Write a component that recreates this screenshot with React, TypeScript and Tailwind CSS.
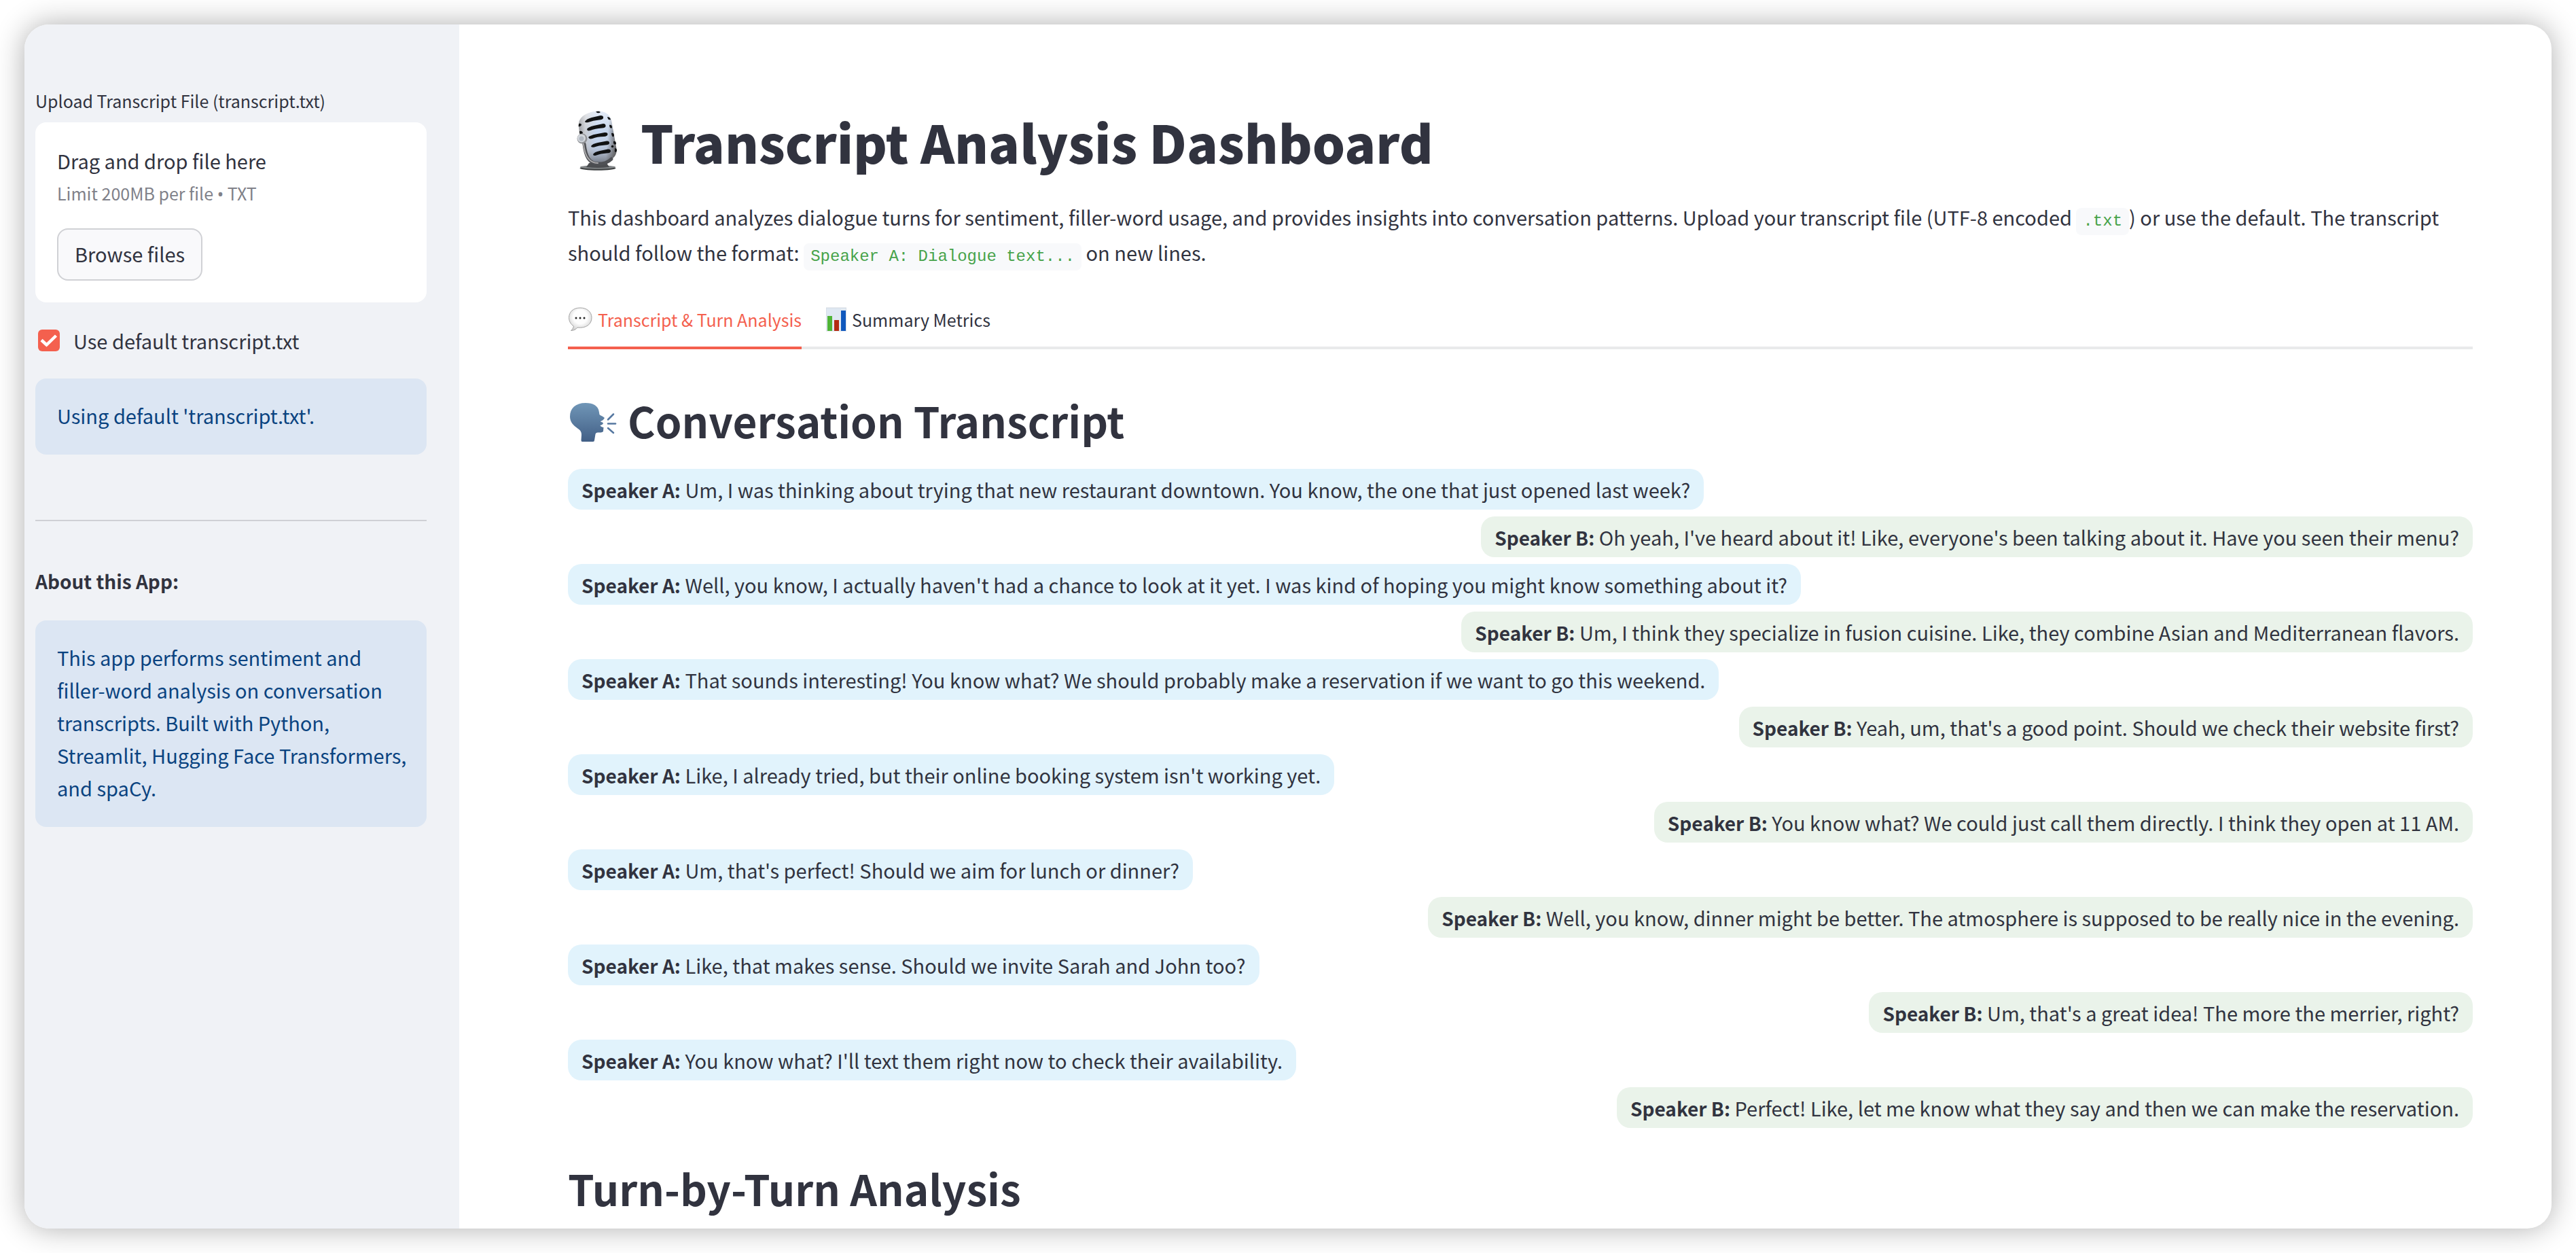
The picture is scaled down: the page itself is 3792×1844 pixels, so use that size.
import React, { useState } from "react";

const turns: [string, string][] = [
  ["A", "Um, I was thinking about trying that new restaurant downtown. You know, the one that just opened last week?"],
  ["B", "Oh yeah, I've heard about it! Like, everyone's been talking about it. Have you seen their menu?"],
  ["A", "Well, you know, I actually haven't had a chance to look at it yet. I was kind of hoping you might know something about it?"],
  ["B", "Um, I think they specialize in fusion cuisine. Like, they combine Asian and Mediterranean flavors."],
  ["A", "That sounds interesting! You know what? We should probably make a reservation if we want to go this weekend."],
  ["B", "Yeah, um, that's a good point. Should we check their website first?"],
  ["A", "Like, I already tried, but their online booking system isn't working yet."],
  ["B", "You know what? We could just call them directly. I think they open at 11 AM."],
  ["A", "Um, that's perfect! Should we aim for lunch or dinner?"],
  ["B", "Well, you know, dinner might be better. The atmosphere is supposed to be really nice in the evening."],
  ["A", "Like, that makes sense. Should we invite Sarah and John too?"],
  ["B", "Um, that's a great idea! The more the merrier, right?"],
  ["A", "You know what? I'll text them right now to check their availability."],
  ["B", "Perfect! Like, let me know what they say and then we can make the reservation."],
];

function MicIcon() {
  return (
    <svg viewBox="16 0 91 120" className="h-[120px] w-[91px] shrink-0" aria-hidden="true">
      <defs>
        <linearGradient id="micBody" x1="0" y1="0.2" x2="1" y2="0.3">
          <stop offset="0" stopColor="#8d8f94" />
          <stop offset="0.18" stopColor="#c9ccd2" />
          <stop offset="0.5" stopColor="#c3d5f1" />
          <stop offset="0.78" stopColor="#c4d3ea" />
          <stop offset="1" stopColor="#6d6f73" />
        </linearGradient>
        <linearGradient id="micShade" x1="0" y1="0" x2="0" y2="1">
          <stop offset="0" stopColor="#fff" stopOpacity="0.55" />
          <stop offset="0.4" stopColor="#fff" stopOpacity="0" />
          <stop offset="0.75" stopColor="#6a6462" stopOpacity="0.15" />
          <stop offset="1" stopColor="#4a4a4c" stopOpacity="0.6" />
        </linearGradient>
      </defs>
      <ellipse cx="60" cy="99.500" rx="26.500" ry="3.200" fill="#3f4243" />
      <ellipse cx="60" cy="97.800" rx="26" ry="2.600" fill="#85898b" />
      <path d="M47 92 Q60 88 73 92 L77 98 Q60 100 43 98Z" fill="#4b4d50" />
      <path
        d="M32 34 C33 23 45 17 58 16 C70 15 77 20 80 29 L87 68 C90 81 82 88 68 90 C55 92 45 88 42 79 C39 68 31 48 32 34Z"
        fill="url(#micBody)"
      />
      <path
        d="M32 34 C33 23 45 17 58 16 C70 15 77 20 80 29 L87 68 C90 81 82 88 68 90 C55 92 45 88 42 79 C39 68 31 48 32 34Z"
        fill="url(#micShade)"
      />
      <g fill="#111213">
        <path d="M41 31 Q43 27 51 25 L64 22 Q69 22 68 26 Q67 28 62 28.500 Q53 29 46 32 Q41 33 41 31Z" />
        <path d="M44 42 Q46 39 54 37 L68 34 Q72 34 71.500 38 Q71 40 66 40.500 Q56 41 49 44 Q44 45.500 44 42Z" />
        <path d="M46 54 Q49 51 57 49.500 L70 47 Q75 46.500 74.500 50 Q74 52.500 69 53 Q59 53 52 56 Q47 57.500 46 54Z" />
        <path d="M50 67 Q52 63.500 60 62 L73 59.500 Q77.500 59 77 63 Q76.500 65 71 65.500 Q61 66 55 68.500 Q50 69.500 50 67Z" />
        <path d="M53 79 Q55 75.500 63 74 L75 71.500 Q79.500 71.500 79 75 Q78 77.500 73 77.500 Q64 78 58 80.500 Q53 82 53 79Z" />
        <path d="M57 16.500 Q61 15 64 17 Q62 19 59 18Z" />
        <path d="M74 24 Q78 24 79 28 Q76 29 75 27Z" />
        <path d="M77 36 Q81 35 81 40 Q79 42 77.500 39Z" />
        <path d="M80 48 Q84 47 84 52 Q82 55 80.500 51Z" />
        <path d="M83 60 Q87 59 87 64 Q85 66 83 63Z" />
        <path d="M85 70 Q90 71 87 76 Q84 76 85 72Z" />
        <circle cx="81.500" cy="67.500" r="1.800" />
        <path d="M32 34 Q36 33 36 36 Q34 39 31.500 38Z" />
        <path d="M33 45 Q37 44 38 48 Q35 51 33 48Z" />
      </g>
      <path d="M40 64 C42 82 47 93 61 93 C70 93 76 90 80 86" fill="none" stroke="#4f5155" strokeWidth="5" strokeLinecap="round" />
      <path d="M39 64 C41 82 47 92 60 92" fill="none" stroke="#aaa9ab" strokeWidth="2" strokeLinecap="round" />
      <circle cx="37" cy="56" r="7.500" fill="#909296" />
      <circle cx="36" cy="55.500" r="6" fill="#d3d7dc" />
      <circle cx="36" cy="56" r="3.500" fill="#b0b7c1" />
    </svg>
  );
}

function HeadIcon() {
  return (
    <svg viewBox="0 0 76 64" className="h-[64px] w-[76px] shrink-0" aria-hidden="true">
      <defs>
        <linearGradient id="head" x1="0" y1="0" x2="0" y2="1">
          <stop offset="0" stopColor="#7096b7" />
          <stop offset="1" stopColor="#425f86" />
        </linearGradient>
      </defs>
      <path
        d="M26 7 C11 7 3 15 3 27 C3 35 8 40 15 45 C19 48 20 50 20 54 L19.500 62 Q19.500 64 21 64 L37 64 Q39 64 39 62 L40.500 53 Q41 50.500 44 50.500 Q51.500 51 52 48.500 L52.500 43 Q48 42 47.500 40 Q50 39.500 52 37.500 L51 35.500 Q48 35 48 34 Q52 33 54 29 Q52 27 47.500 25 Q46 24 46 21 C45 11 37 7 26 7Z"
        fill="url(#head)"
      />
      <g stroke="#5577a0" strokeWidth="2.500" strokeLinecap="round">
        <path d="M59 31.500 L67 23.500" />
        <path d="M59 37.500 H70" />
        <path d="M59 44 L67 51" />
      </g>
    </svg>
  );
}

function BubbleIcon() {
  return (
    <svg viewBox="0 0 36 36" className="size-[36px] shrink-0" aria-hidden="true">
      <defs>
        <radialGradient id="bubble" cx="0.5" cy="0.4" r="0.6">
          <stop offset="0.5" stopColor="#fdfdfd" />
          <stop offset="1" stopColor="#d2d2d2" />
        </radialGradient>
      </defs>
      <path
        d="M18 1 C8 1 1.500 7 1.500 15.500 C1.500 21 4.500 25.500 8.500 28 C8 31 6 33 4.500 34.500 C9 34.500 12 32.500 14 30 C27 31.500 35 25 35 15.500 C35 7 28 1 18 1Z"
        fill="url(#bubble)"
        stroke="#a3a3a3"
        strokeWidth="1"
      />
      <g fill="#222">
        <circle cx="12" cy="16" r="1.500" />
        <circle cx="18" cy="16" r="1.500" />
        <circle cx="24" cy="16" r="1.500" />
      </g>
    </svg>
  );
}

function ChartIcon() {
  return (
    <svg viewBox="0 0 30 36" className="h-[36px] w-[30px] shrink-0" aria-hidden="true">
      <rect x="0" y="1" width="30" height="34" fill="#dfe8f2" stroke="#cbd3db" strokeWidth="0.800" />
      <rect x="2" y="13" width="7" height="22" fill="#4fb436" />
      <rect x="12" y="19" width="7" height="16" fill="#b32b12" />
      <rect x="22" y="5" width="7" height="30" fill="#1058bd" />
    </svg>
  );
}

function Code({ children }: { children: string }) {
  return (
    <code className="inline-block rounded-lg bg-[#f8f9fb] px-[10px] font-['Liberation_Mono',monospace] text-[24px] leading-[40px] text-[#47a34a]">
      {children}
    </code>
  );
}

export default function App() {
  const [useDefault, setUseDefault] = useState(true);
  return (
    <div className="h-screen overflow-hidden bg-white p-9 font-['Noto_Sans_CJK_SC',sans-serif] text-[29px] leading-[48px] text-[#31333f]">
      <div className="flex h-full overflow-hidden rounded-[36px] bg-white shadow-[0_0_44px_rgba(0,0,0,0.32)]">
        <aside className="flex w-[640px] shrink-0 flex-col bg-[#f0f2f6] pr-12 pl-4 pt-[92px]">
          <label htmlFor="upload" className="text-[25px] leading-[40px]">
            Upload Transcript File (transcript.txt)
          </label>
          <section className="mt-3 rounded-2xl bg-white p-8">
            <div>Drag and drop file here</div>
            <div className="text-[25px] text-[#808189]">
              Limit 200MB per file <span className="font-['Noto_Sans',sans-serif] leading-none">•</span> TXT
            </div>
            <button id="upload" type="button" className="mt-7 h-[77px] rounded-2xl border-2 border-[#d0d1d5] bg-[#f9f9fb] px-6 pb-1">
              Browse files
            </button>
          </section>
          <label className="mt-8 flex items-center gap-5 pl-1">
            <span className="relative flex size-8">
              <input
                type="checkbox"
                checked={useDefault}
                onChange={(e) => setUseDefault(e.target.checked)}
                className="peer size-8 appearance-none rounded-md bg-white checked:bg-[#f4604e]"
              />
              <svg viewBox="0 0 32 32" className="pointer-events-none absolute inset-0 hidden peer-checked:block" aria-hidden="true">
                <path d="M5 15.500 L12.500 22.500 L26.500 9" fill="none" stroke="#fff" strokeWidth="4.500" />
              </svg>
            </span>
            Use default transcript.txt
          </label>
          <p className="mt-8 rounded-2xl bg-[#dce6f3] pt-[30px] pr-6 pb-[34px] pl-8 text-[#0a4380]">Using default 'transcript.txt'.</p>
          <hr className="mt-24 border-t-2 border-[#cfd0d5]" />
          <h2 className="mt-16 text-[28px] font-bold">About this App:</h2>
          <p className="mt-[34px] rounded-2xl bg-[#dce6f3] pt-[30px] pr-6 pb-[34px] pl-8 text-[#0a4380]">
            This app performs sentiment and filler-word analysis on conversation transcripts. Built with Python, Streamlit, Hugging Face
            Transformers, and spaCy.
          </p>
        </aside>
        <main className="min-w-0 grow overflow-hidden pr-[116px] pl-40 pt-28">
          <h1 className="flex items-center gap-4 text-[76px] leading-[120px] font-black">
            <MicIcon />
            Transcript Analysis Dashboard
          </h1>
          <p className="mt-[26px] leading-[50px]">
            This dashboard analyzes dialogue turns for sentiment, filler-word usage, and provides insights into conversation patterns. Upload
            your transcript file (UTF-8 encoded <Code>.txt</Code>) or use the default. The transcript should follow the format:{" "}
            <Code>Speaker A: Dialogue text...</Code> on new lines.
          </p>
          <div role="tablist" className="mt-8 flex gap-9 text-[25px] shadow-[inset_0_-4px_0_#e9eaeb]">
            <button role="tab" aria-selected="true" type="button" className="flex h-[84px] items-center gap-2 border-b-4 border-[#f4604e] text-[#f4604e]">
              <BubbleIcon />
              Transcript &amp; Turn Analysis
            </button>
            <button role="tab" aria-selected="false" type="button" className="flex h-[84px] items-center gap-2 border-b-4 border-transparent">
              <ChartIcon />
              Summary Metrics
            </button>
          </div>
          <h2 className="mt-[62px] flex items-center gap-3 text-[62px] leading-[84px] font-bold">
            <HeadIcon />
            Conversation Transcript
          </h2>
          <ul className="mt-[30px] flex flex-col gap-[10px] leading-[60px]">
            {turns.map(([who, text], i) => (
              <li
                key={i}
                className={
                  who === "A" ? "self-start rounded-[20px] bg-[#e1f3fc] px-5" : "self-end rounded-[20px] bg-[#eaf3ea] px-5"
                }
              >
                <b className="text-[28px] leading-none">Speaker {who}:</b> {text}
              </li>
            ))}
          </ul>
          <h2 className="mt-[46px] text-[62px] leading-[84px] font-bold">Turn-by-Turn Analysis</h2>
        </main>
      </div>
    </div>
  );
}
